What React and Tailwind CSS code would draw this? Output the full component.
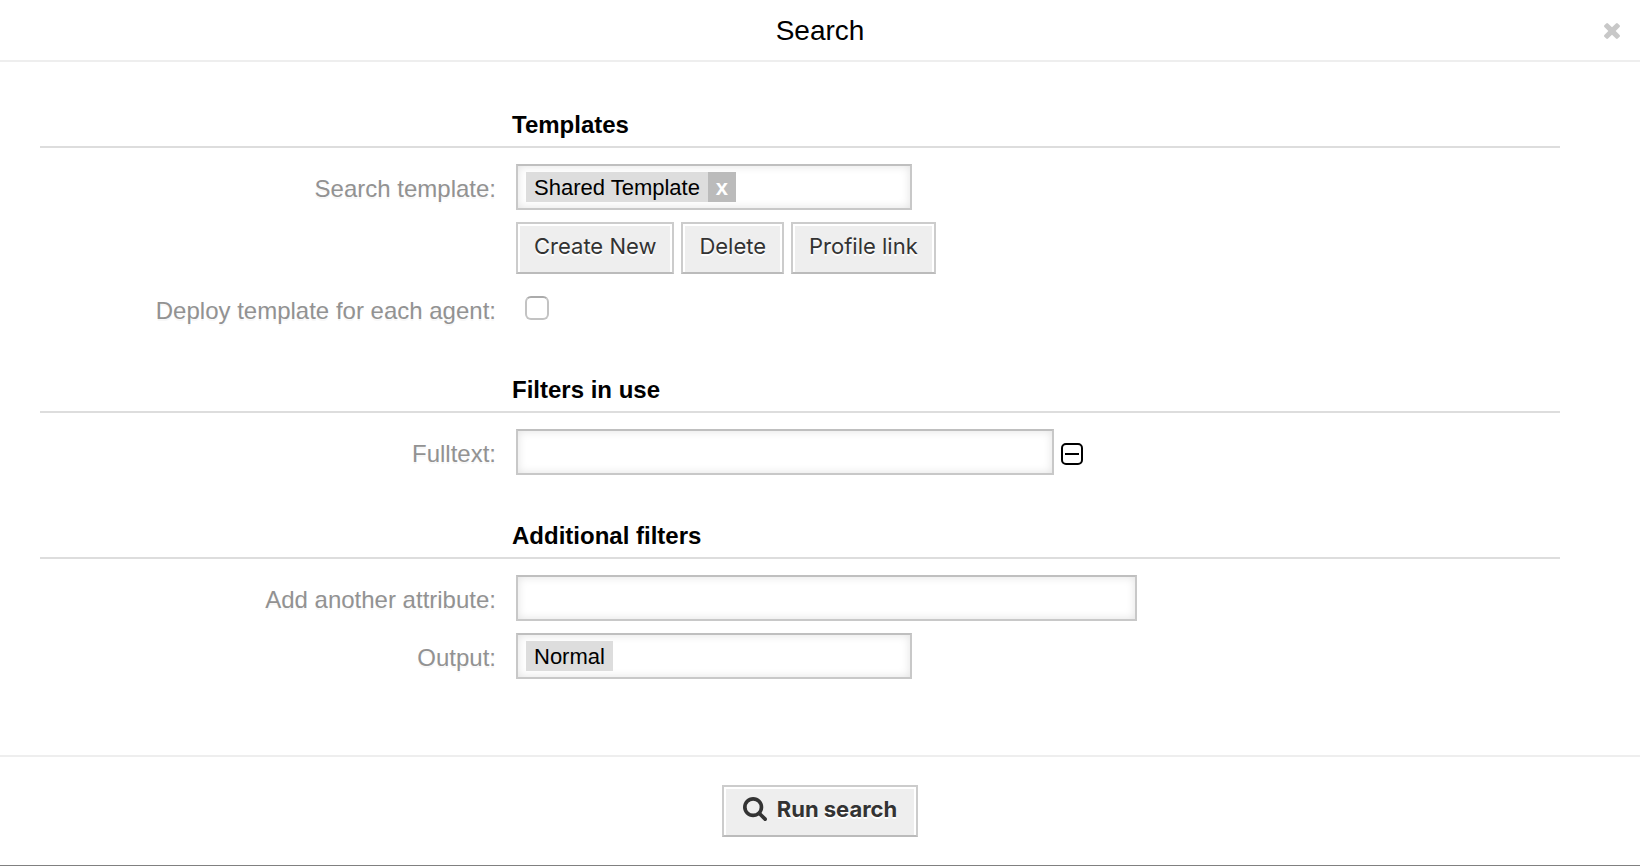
import { useState } from 'react';

const fieldBox =
  'h-[46px] max-w-full border-2 border-[#c8c8c8] border-t-[#bfbfbf] bg-white shadow-[inset_0_0_10px_#e2e2e2]';
const buttonBox =
  'flex h-[52px] items-center border-2 border-[#ccc] border-b-[#bbb] bg-[#eee] pb-[5px] text-[#333] shadow-[inset_2px_2px_0_#fff,inset_-2px_2px_0_#fff] [text-shadow:0_2px_0_#fff] font-[Inter,sans-serif] text-[22px] leading-7 whitespace-nowrap';

function Section({ title, children }) {
  return (
    <section>
      <div className="border-b-2 border-[#ddd] pb-[7px]">
        <h2 className="ml-[30%] pl-4 text-2xl leading-7 font-bold">{title}</h2>
      </div>
      <div className="flex flex-col gap-3 pt-4">{children}</div>
    </section>
  );
}

function Row({ label, htmlFor, children }) {
  return (
    <div className="flex items-start">
      <label
        htmlFor={htmlFor}
        className="w-[30%] shrink-0 pt-[9px] text-right text-2xl leading-8 text-[#929292] [text-shadow:0_2px_0_#f7f7f7]"
      >
        {label}
      </label>
      <div className="min-w-0 flex-1 pl-5">{children}</div>
    </div>
  );
}

function TokenField({ id, token, onRemove }) {
  return (
    <div className={`${fieldBox} flex w-[396px] items-center px-2`}>
      {token && (
        <span className="flex h-[30px] shrink-0 bg-[#ddd] text-[22px] leading-8">
          <span className="px-2">{token}</span>
          {onRemove && (
            <button
              type="button"
              aria-label={`Remove ${token}`}
              onClick={onRemove}
              className="w-7 bg-[#bbb] text-center font-bold text-white"
            >
              x
            </button>
          )}
        </span>
      )}
      <input id={id} type="text" className="h-full min-w-0 flex-1 bg-transparent px-2 text-[22px] outline-none" />
    </div>
  );
}

export default function App() {
  const [template, setTemplate] = useState('Shared Template');

  return (
    <div
      role="dialog"
      aria-labelledby="dialog-title"
      className="flex min-h-screen flex-col border-b border-[#808080] bg-white font-['Liberation_Sans',Arial,sans-serif] text-black"
    >
      <header className="grid grid-cols-[1fr_auto_1fr] items-center border-b-2 border-[#eee] px-5 pt-[13px] pb-[11px]">
        <h1 id="dialog-title" className="col-start-2 text-[28px] leading-9">
          Search
        </h1>
        <button type="button" aria-label="Close" className="justify-self-end text-[#c8c8c8]">
          <svg viewBox="302 366 1188 1188" className="size-4" fill="currentColor" aria-hidden="true">
            <path d="M1490 1322q0 40-28 68l-136 136q-28 28-68 28t-68-28l-294-294-294 294q-28 28-68 28t-68-28l-136-136q-28-28-28-68t28-68l294-294-294-294q-28-28-28-68t28-68l136-136q28-28 68-28t68 28l294 294 294-294q28-28 68-28t68 28l136 136q28 28 28 68t-28 68l-294 294 294 294q28 28 28 68z" />
          </svg>
        </button>
      </header>

      <main className="flex flex-1 flex-col gap-[47px] pt-[49px] pr-20 pb-[76px] pl-10">
        <Section title="Templates">
          <Row label="Search template:" htmlFor="template">
            <div className="flex flex-col gap-3">
              <TokenField id="template" token={template} onRemove={() => setTemplate('')} />
              <div className="flex flex-wrap gap-[7px]">
                <button type="button" className={`${buttonBox} px-4`}>
                  Create New
                </button>
                <button type="button" className={`${buttonBox} px-4`}>
                  Delete
                </button>
                <button type="button" className={`${buttonBox} px-4`}>
                  Profile link
                </button>
              </div>
            </div>
          </Row>
          <Row label="Deploy template for each agent:" htmlFor="deploy">
            <div className="flex pt-[10px] pb-[9px] pl-[9px]">
              <input
                id="deploy"
                type="checkbox"
                className="size-6 appearance-none rounded-md border-2 border-[#c3c3c3] border-t-[#ababab] bg-white checked:bg-[#888]"
              />
            </div>
          </Row>
        </Section>

        <Section title="Filters in use">
          <Row label="Fulltext:" htmlFor="fulltext">
            <div className="flex items-center gap-[7px]">
              <input id="fulltext" type="text" className={`${fieldBox} w-[538px] px-2 text-[22px]`} />
              <button type="button" aria-label="Remove filter" className="pt-1">
                <svg viewBox="0 0 22 22" className="size-[22px]" fill="none" stroke="#000" strokeWidth="2" aria-hidden="true">
                  <rect x="1" y="1" width="20" height="20" rx="4" />
                  <path d="M4 11h14" />
                </svg>
              </button>
            </div>
          </Row>
        </Section>

        <Section title="Additional filters">
          <Row label="Add another attribute:" htmlFor="attribute">
            <input id="attribute" type="text" className={`${fieldBox} block w-[621px] px-2 text-[22px]`} />
          </Row>
          <Row label="Output:" htmlFor="output">
            <TokenField id="output" token="Normal" />
          </Row>
        </Section>
      </main>

      <footer className="flex justify-center border-t-2 border-[#eee] py-7">
        <button type="button" className={`${buttonBox} gap-[10px] px-[19px] font-bold`}>
          <svg viewBox="64 128 1664 1664" className="size-6" fill="currentColor" aria-hidden="true">
            <path d="M1216 832q0-185-131.5-316.5t-316.5-131.5-316.5 131.5-131.5 316.5 131.5 316.5 316.5 131.5 316.5-131.5 131.5-316.5zm512 832q0 52-38 90t-90 38q-54 0-90-38l-343-342q-179 124-399 124-143 0-273.5-55.5t-225-150-150-225-55.5-273.5 55.5-273.5 150-225 225-150 273.5-55.5 273.5 55.5 225 150 150 225 55.5 273.5q0 220-124 399l343 343q37 37 37 90z" />
          </svg>
          Run search
        </button>
      </footer>
    </div>
  );
}
